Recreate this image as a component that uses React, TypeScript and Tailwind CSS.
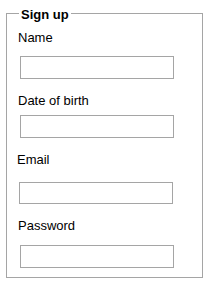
export default function App() {
  const labelCls = 'block text-[13px] leading-[15px] text-black';
  const inputCls = 'block w-[154px] border border-[#a5a5a5] bg-white px-1 text-[13px] outline-none';

  return (
    <div className="min-h-[282px] w-[214px] bg-white pt-[5px] font-['Liberation_Sans',Arial,sans-serif]">
      <fieldset className="ml-[6px] w-[197px] border border-[#a5a5a5] pb-[9px] pl-[11px] pr-0 pt-[8px]">
        <legend className="ml-[1px] px-[2px] pt-[2px] text-[13px] font-bold leading-[15px] text-black">
          Sign up
        </legend>

        <label className={labelCls}>Name</label>
        <input type="text" className={`${inputCls} ml-[2px] mt-[11px] h-[23px]`} />

        <label className={`${labelCls} mt-[14px]`}>Date of birth</label>
        <input type="text" className={`${inputCls} ml-[2px] mt-[7px] h-[23px]`} />

        <label className={`${labelCls} ml-[-1px] mt-[14px]`}>Email</label>
        <input type="text" className={`${inputCls} ml-[1px] mt-[15px] h-[22px]`} />

        <label className={`${labelCls} mt-[14px]`}>Password</label>
        <input type="password" className={`${inputCls} ml-[2px] mt-[12px] h-[23px]`} />
      </fieldset>
    </div>
  );
}
